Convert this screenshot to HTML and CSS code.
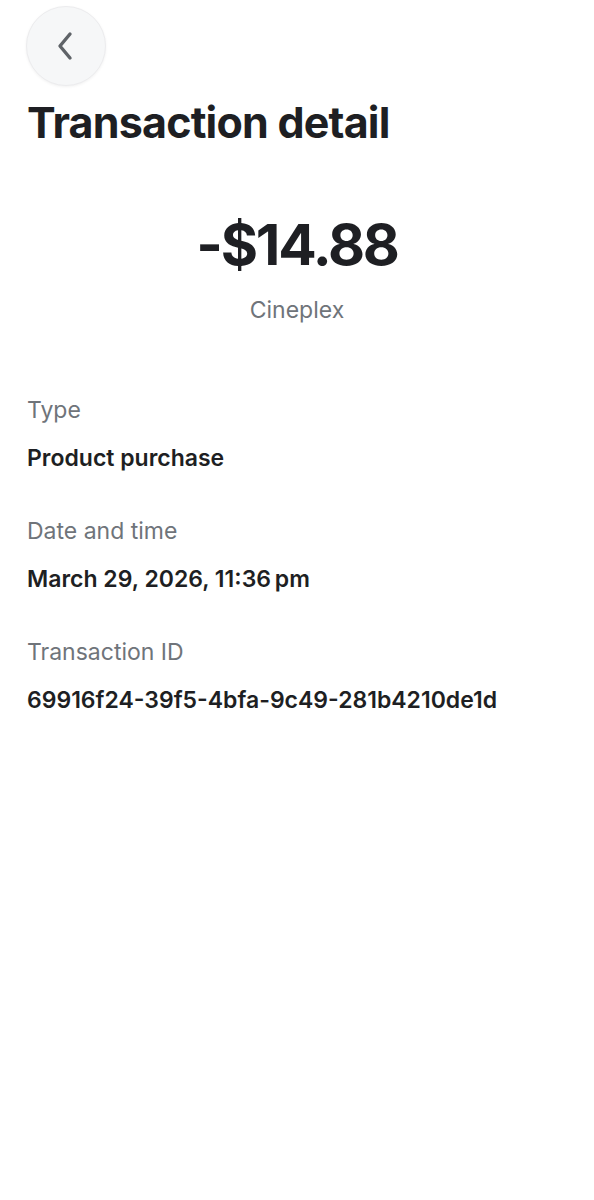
FILE: index.html
```html
<!DOCTYPE html>
<html lang="en">
<head>
  <meta charset="UTF-8" />
  <title>Transaction detail</title>
  <meta name="viewport" content="width=device-width, initial-scale=1.0" />
  <link rel="stylesheet" href="styles.css">
</head>
<body>
  <div class="page">
    <button class="back" aria-label="Back">
      <svg width="26" height="30" viewBox="0 0 26 30" fill="none">
        <path d="M17 3 L7 15 L17 27" stroke="#5f6368" stroke-width="3.4" stroke-linecap="round" stroke-linejoin="round"/>
      </svg>
    </button>

    <h1 class="title">Transaction detail</h1>

    <div class="summary">
      <div class="amount">-$14.88</div>
      <div class="merchant">Cineplex</div>
    </div>

    <div class="fields">
      <div class="field">
        <div class="label">Type</div>
        <div class="value">Product purchase</div>
      </div>
      <div class="field">
        <div class="label">Date and time</div>
        <div class="value">March 29, 2026, 11:36&#8201;pm</div>
      </div>
      <div class="field">
        <div class="label">Transaction ID</div>
        <div class="value">69916f24-39f5-4bfa-9c49-281b4210de1d</div>
      </div>
    </div>
  </div>
</body>
</html>
```

FILE: styles.css
```css
:root {
  --text: #1e1f23;
  --muted: #6f747a;
}
* {
  margin: 0;
  padding: 0;
  box-sizing: border-box;
}
body {
  background: #fff;
  font-family: Inter, "Noto Sans", sans-serif;
  color: var(--text);
}
.page {
  padding: 6px 27px 0;
}
.back {
  width: 80px;
  height: 80px;
  margin-left: -1px;
  border-radius: 50%;
  border: 1px solid #ececee;
  background: #f6f7f8;
  box-shadow: 0 1px 3px rgba(0, 0, 0, 0.06);
  display: flex;
  justify-content: center;
  align-items: center;
  cursor: pointer;
}
.title {
  margin-top: 8px;
  font-size: 43px;
  font-weight: 700;
  letter-spacing: -0.8px;
  line-height: 56px;
}
.summary {
  display: flex;
  flex-direction: column;
  align-items: center;
  margin-top: 61px;
}
.amount {
  font-size: 57px;
  font-weight: 700;
  letter-spacing: -2.2px;
  line-height: 68px;
}
.merchant {
  margin-top: 17px;
  font-size: 23px;
  line-height: 28px;
  color: var(--muted);
}
.fields {
  margin-top: 72px;
  display: flex;
  flex-direction: column;
  gap: 45px;
}
.label {
  font-size: 23px;
  color: var(--muted);
  line-height: 28px;
}
.value {
  margin-top: 20px;
  font-size: 23px;
  font-weight: 600;
  line-height: 28px;
}
```
